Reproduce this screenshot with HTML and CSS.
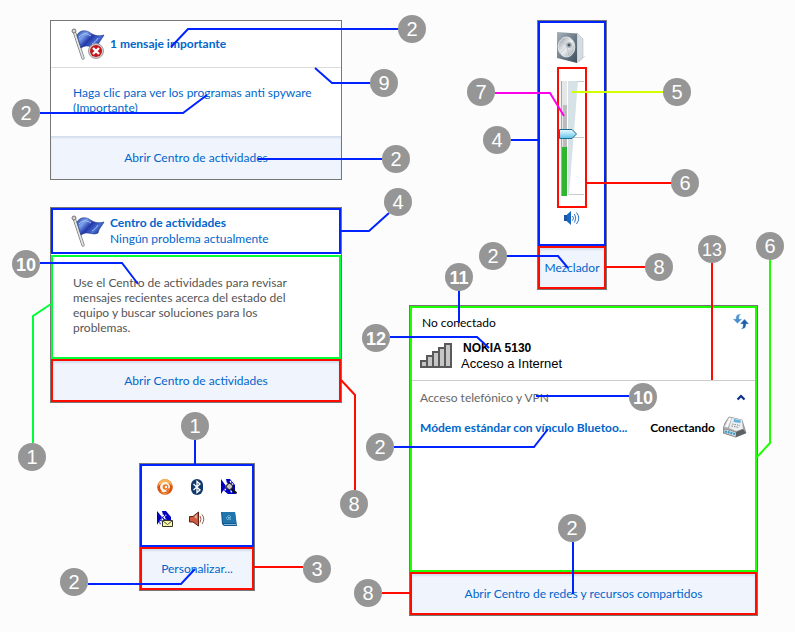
FILE: index.html
```html
<!DOCTYPE html>
<html lang="es">
<head>
<meta charset="utf-8">
<title>Área de notificación</title>
<meta name="viewport" content="width=device-width, initial-scale=1">
<link rel="stylesheet" href="styles.css">
</head>
<body>
<svg class="defs" aria-hidden="true">
  <defs>
    <linearGradient id="cloth" x1="0" y1="0" x2="1" y2="0.6">
      <stop offset="0" stop-color="#1c3c9c"/><stop offset="0.3" stop-color="#7da3ee"/>
      <stop offset="0.55" stop-color="#2338a8"/><stop offset="0.8" stop-color="#4a6fd6"/><stop offset="1" stop-color="#15308c"/>
    </linearGradient>
    <symbol id="flag" viewBox="0 0 34 32">
      <path d="M3 3L12 30" stroke="#777" stroke-width="3.200" stroke-linecap="round"/>
      <path d="M3 3L12 30" stroke="#e3e4e6" stroke-width="1.800" stroke-linecap="round"/>
      <circle cx="3" cy="3" r="2" fill="#d5d5d5" stroke="#777"/>
      <path d="M6 7C9 2 14 2 18 4C22 7 27 9 33 7C31 11 28 13 27 18C21 21 17 15 10 20Z" fill="url(#cloth)" stroke="#1a3283" stroke-width="0.600"/>
      <path d="M8 9C12 4 17 6 20 8M27 10C25 13 23 15 21 16" fill="none" stroke="#a9c0f3" stroke-width="1"/>
    </symbol>
  </defs>
</svg>

<main class="board">
  <div class="column">

    <section class="panel">
      <header class="alert-head">
        <svg class="flag" viewBox="0 0 34 32" aria-hidden="true">
          <use href="#flag"/>
          <circle cx="25" cy="23" r="7.500" fill="#d0d0d2" stroke="#8c8c8c" stroke-width="0.800"/>
          <circle cx="25" cy="23" r="6" fill="#c4161c"/>
          <path d="M22 20L28 26M28 20L22 26" stroke="#fff" stroke-width="2.400"/>
        </svg>
        <h2 class="title">1 mensaje importante</h2>
      </header>
      <div class="alert-body">
        <a class="link" href="#spyware">Haga clic para ver los programas anti spyware (Importante)</a>
      </div>
      <footer class="foot"><a class="link" href="#centro">Abrir Centro de actividades</a></footer>
      <svg class="leads" viewBox="50 20 1 1">
        <path class="lead blue" d="M40 113H183L207 95"/>
        <circle cx="26" cy="113" r="14"/><text x="26" y="120">2</text>
      </svg>
      <svg class="leads leads-end" viewBox="342 20 1 1">
        <path class="lead blue" d="M398 29H188L171 47M370 83H332L315 68M382 159H258"/>
        <circle cx="412" cy="29" r="14"/><text x="412" y="36">2</text>
        <circle cx="384" cy="83" r="14"/><text x="384" y="90">9</text>
        <circle cx="396" cy="159" r="14"/><text x="396" y="166">2</text>
      </svg>
    </section>

    <section class="panel">
      <header class="box box-blue status-head">
        <svg class="flag" viewBox="0 0 34 32" aria-hidden="true"><use href="#flag"/></svg>
        <div>
          <h2 class="title">Centro de actividades</h2>
          <p class="subtitle">Ningún problema actualmente</p>
        </div>
      </header>
      <div class="box box-green status-body">
        <p>Use el Centro de actividades para revisar mensajes recientes acerca del estado del equipo y buscar soluciones para los problemas.</p>
      </div>
      <footer class="box box-red foot"><a class="link" href="#centro">Abrir Centro de actividades</a></footer>
      <svg class="leads" viewBox="50 207 1 1">
        <path class="lead blue" d="M40 263H122L138 284"/>
        <path class="lead green" d="M51 304L33 316V443"/>
        <circle cx="26" cy="264" r="14"/><text class="wide" x="26" y="271">10</text>
        <circle cx="32" cy="457" r="14"/><text x="32" y="464">1</text>
      </svg>
      <svg class="leads leads-end" viewBox="342 207 1 1">
        <path class="lead blue" d="M341 231H369L389 213"/>
        <path class="lead red" d="M341 380L355 395V490"/>
        <circle cx="398" cy="202" r="14"/><text x="398" y="209">4</text>
        <circle cx="354" cy="504" r="14"/><text x="354" y="511">8</text>
      </svg>
    </section>

    <section class="panel tray">
      <div class="box box-blue tray-icons">
        <button class="icon-button" aria-label="Antivirus">
          <svg viewBox="0 0 16 16"><circle cx="8" cy="8" r="7.800" fill="#d9530f"/><path d="M1 7A7 7 0 0 1 15 7Q12 3 8 4Q4 4 1 7Z" fill="#f9b15a"/><path d="M3 12Q8 16 13 12Q10 15 8 15Q5 15 3 12Z" fill="#ffb648"/><circle cx="8" cy="8" r="5" fill="#fff4e4"/><circle cx="8.500" cy="8" r="2.800" fill="#ee7420"/><circle cx="9" cy="8" r="1.200" fill="#fff"/><path d="M4 12.500L7.500 11.500V13.500Z" fill="#fff"/><path d="M9.500 12L12.500 9.500" stroke="#e8661a" stroke-width="1.500"/></svg>
        </button>
        <button class="icon-button" aria-label="Bluetooth">
          <svg viewBox="0 0 16 16"><rect x="2" width="12" height="16" rx="6" fill="#12386b"/><path d="M4.500 5L11 11L8 13.500V2.500L11 5L4.500 11" fill="none" stroke="#fff" stroke-width="1.300"/></svg>
        </button>
        <button class="icon-button" aria-label="Búsqueda">
          <svg viewBox="0 0 16 16"><path d="M0 0L5 7L0 15Z" fill="#0000c0"/><path d="M5 0H9L14 6V15H7L2 11L6 6Z" fill="#0000c0"/><path d="M4 1L11 14M2 14L8 5M9 2L12 6" stroke="#fff" stroke-width="1.300" stroke-dasharray="2 1"/><circle cx="8.500" cy="7.500" r="3" fill="#c9c9c9" stroke="#111"/><path d="M11 10L15.500 14.500" stroke="#111" stroke-width="2"/></svg>
        </button>
        <button class="icon-button" aria-label="Correo">
          <svg viewBox="0 0 16 16"><path d="M0 0L5 6L0 14Z" fill="#0000c0"/><path d="M5 0H9L14 6V9H5L3 14L2 11L6 5Z" fill="#0000c0"/><path d="M4 1L9 9M1 14L9 4" stroke="#fff" stroke-width="1.400" stroke-dasharray="2 1"/><path d="M5.500 9.500H15.500V15.500H5.500Z" fill="#f6f6a0" stroke="#333"/><path d="M6 10L10.500 13.500L15 10" fill="none" stroke="#555"/></svg>
        </button>
        <button class="icon-button" aria-label="Sonido">
          <svg viewBox="0 0 16 16"><path d="M.5 5.500H4L9.500 1V15L4 11H.5Z" fill="#cf5a3c" stroke="#5a2117"/><path d="M5 6L8 3V8Z" fill="#eda48d"/><path d="M11 5Q13 8 11 11.500M13 3.500Q16.500 8 13 13" fill="none" stroke="#9c5a48"/></svg>
        </button>
        <button class="icon-button" aria-label="Pantalla">
          <svg viewBox="0 0 16 16"><path d="M0 1H14L16 15H3L1 13Z" fill="#14598f"/><path d="M1 1H14L15 12H2Z" fill="#2274ad"/><path d="M5 7H11M8 4V10M6 5L10 9M10 5L6 9" stroke="#8fd0ee" stroke-dasharray="1 1"/><path d="M3 13.500H15" stroke="#7dbbe0"/></svg>
        </button>
      </div>
      <footer class="box box-red foot"><a class="link" href="#personalizar">Personalizar...</a></footer>
      <svg class="leads" viewBox="139 463 1 1">
        <path class="lead blue" d="M195 440V464M88 584H181L195 569"/>
        <circle cx="195" cy="426" r="14"/><text x="195" y="433">1</text>
        <circle cx="74" cy="582" r="14"/><text x="74" y="589">2</text>
      </svg>
      <svg class="leads leads-end" viewBox="255 463 1 1">
        <path class="lead red" d="M254 567H303"/>
        <circle cx="317" cy="569" r="14"/><text x="317" y="576">3</text>
      </svg>
    </section>
  </div>

  <div class="column">

    <section class="panel volume">
      <div class="box box-blue volume-body">
        <svg class="speaker" viewBox="0 0 30 32" aria-hidden="true">
          <defs>
            <linearGradient id="front" x1="0" y1="0" x2="1" y2="1"><stop offset="0" stop-color="#a7b2bb"/><stop offset="0.5" stop-color="#6f7f8c"/><stop offset="1" stop-color="#3f4f5b"/></linearGradient>
            <linearGradient id="cone" x1="0" y1="0" x2="1" y2="1"><stop offset="0" stop-color="#8c969d"/><stop offset="0.5" stop-color="#eef1f3"/><stop offset="1" stop-color="#9aa4ab"/></linearGradient>
          </defs>
          <path d="M22 30L30 23L22 27Z" fill="#ddd"/>
          <path d="M20 1L26 7V25L20 31Z" fill="#d5dce2" stroke="#aab3ba" stroke-width="0.500"/>
          <path d="M0 0L20 1.500V31L0 26Z" fill="url(#front)"/>
          <ellipse cx="9.500" cy="15" rx="8.300" ry="10" fill="url(#cone)" stroke="#dfe5e9" stroke-width="1"/>
          <path d="M10 14L3 22M10 14L4 8M10 14L12 24" stroke="#b3bbc1" stroke-width="0.700"/>
          <circle cx="12" cy="13" r="3" fill="#aeb7be"/><circle cx="12" cy="13" r="1.500" fill="#45525c"/>
        </svg>
        <div class="box box-red slider">
          <svg class="slider-art" viewBox="0 0 26 137" aria-hidden="true">
            <defs><linearGradient id="thumb" x1="0" y1="0" x2="0" y2="1"><stop offset="0" stop-color="#effaff"/><stop offset="0.500" stop-color="#a9e1f7"/><stop offset="1" stop-color="#5dc0e6"/></linearGradient></defs>
            <path d="M9 12H19L10 126H9Z" fill="#d7e1e8"/>
            <path d="M18 12.500H25M13 68.500H25M10 125.500H25" stroke="#c9c9c9"/>
            <rect x="2" y="12" width="6" height="115" fill="#e6e6e6"/>
            <rect x="4" y="36" width="4" height="43" fill="#bcbcbc"/>
            <rect x="2" y="12" width="1" height="115" fill="#a9a9a9"/>
            <rect x="3" y="78" width="5" height="49" fill="#30b52e"/>
            <path d="M0.500 60.500H13L17.500 65L13 69.500H0.500Z" fill="url(#thumb)" stroke="#176f91"/>
          </svg>
          <input class="slider-input" type="range" min="0" max="100" value="53" aria-label="Volumen">
        </div>
        <button class="icon-button" aria-label="Silenciar">
          <svg viewBox="0 0 16 16"><path d="M0 5H3V11H0Z" fill="#1a56a6"/><path d="M3 4.500L7 1V15L3 11.500Z" fill="#1567c0"/><path d="M8.500 6Q10.500 8 8.500 10.500M10.500 4Q13 8 10.500 12.500M12.500 2.500Q17 8 12.500 14" fill="none" stroke="#2a72bd"/></svg>
        </button>
      </div>
      <footer class="box box-red foot"><a class="link" href="#mezclador">Mezclador</a></footer>
      <svg class="leads" viewBox="537 20 1 1">
        <path class="lead magenta" d="M495 93H550L564 116"/>
        <path class="lead lime" d="M572 92H663"/>
        <path class="lead blue" d="M511 140H538M507 256H558L568 268"/>
        <path class="lead red" d="M587 183H671M606 267H645"/>
        <circle cx="481" cy="92" r="14"/><text x="481" y="99">7</text>
        <circle cx="677" cy="92" r="14"/><text x="677" y="99">5</text>
        <circle cx="497" cy="140" r="14"/><text x="497" y="147">4</text>
        <circle cx="685" cy="183" r="14"/><text x="685" y="190">6</text>
        <circle cx="493" cy="256" r="14"/><text x="493" y="263">2</text>
        <circle cx="659" cy="267" r="14"/><text x="659" y="274">8</text>
      </svg>
    </section>

    <section class="panel">
      <div class="box box-net network-body">
        <div class="net-current">
          <div class="net-row">
            <p class="net-state">No conectado</p>
            <button class="icon-button" aria-label="Actualizar">
              <svg viewBox="0 0 16 16"><path d="M8 0C3 0 3 3 3 5H0L4.500 9.500L9 5H6C6 3 6 1 8 0Z" fill="#4a90d0" stroke="#bcd8ee" stroke-width="0.500"/><path d="M8 15C13 15 13 12 13 10H16L11.500 5L7 10H10C10 12 10 14 8 15Z" fill="#1f5fa8" stroke="#bcd8ee" stroke-width="0.500"/></svg>
            </button>
          </div>
          <div class="net-item">
            <svg class="signal" viewBox="0 0 32 26" aria-hidden="true"><path d="M1 18H7V24H1ZM7 13H13V24H7ZM13 9H19V24H13ZM19 5H25V24H19ZM25 1H31V24H25Z" fill="#c6c6c6" stroke="#5a5a5a" stroke-width="2"/></svg>
            <div>
              <p class="net-name">NOKIA 5130</p>
              <p class="net-access">Acceso a Internet</p>
            </div>
          </div>
        </div>
        <div class="net-dialup">
          <div class="net-row">
            <p class="net-group">Acceso telefónico y VPN</p>
            <button class="icon-button" aria-label="Contraer">
              <svg viewBox="0 0 16 16"><path d="M4.500 10.500L8 7L11.500 10.500" fill="none" stroke="#0a2f8c" stroke-width="2.200"/></svg>
            </button>
          </div>
          <div class="modem">
            <a class="link strong" href="#modem">Módem estándar con vínculo Bluetoo...</a>
            <span class="modem-state">Conectando</span>
            <svg class="phone" viewBox="0 0 24 24" aria-hidden="true">
              <path d="M2 8L6 2L19 5L23 18L13 22L0 18V14Z" fill="#a9acae" stroke="#777" stroke-width="0.700"/>
              <path d="M1 12L6 2L9 3L5 13Z" fill="#f6f6f6" stroke="#999" stroke-width="0.500"/>
              <path d="M9 3L19 5L20 14L13 16L6 13Z" fill="#eceef0"/>
              <path d="M11 4L18 5.500L17.500 8L10.500 7Z" fill="#63b3e0"/>
              <path d="M9 9L17 10.500M8.500 11L16 12.500" stroke="#888" stroke-dasharray="1.500 1"/>
              <path d="M1 14L13 17V22L1 18Z" fill="#dfe3e6" stroke="#777" stroke-width="0.600"/>
              <path d="M2 16.500L12 19" stroke="#2f9bc4" stroke-width="2.200" stroke-dasharray="2 0.800"/>
              <path d="M13 17L20 14L23 18L13 22Z" fill="#5d6062"/>
            </svg>
          </div>
        </div>
      </div>
      <footer class="box box-red foot"><a class="link" href="#redes">Abrir Centro de redes y recursos compartidos</a></footer>
      <svg class="leads" viewBox="409 305 1 1">
        <path class="lead blue" d="M459 291V323M390 337H477L489 348M394 447H534L548 429M629 396H536M573 542V594"/>
        <path class="lead red" d="M382 593H410"/>
        <circle cx="459" cy="277" r="14"/><text class="wide" x="459" y="284">11</text>
        <circle cx="376" cy="338" r="14"/><text class="wide" x="376" y="345">12</text>
        <circle cx="380" cy="447" r="14"/><text x="380" y="454">2</text>
        <circle cx="643" cy="397" r="14"/><text class="wide" x="643" y="404">10</text>
        <circle cx="572" cy="528" r="14"/><text x="572" y="535">2</text>
        <circle cx="368" cy="593" r="14"/><text x="368" y="600">8</text>
      </svg>
      <svg class="leads leads-end" viewBox="758 305 1 1">
        <path class="lead red" d="M712 263V380"/>
        <path class="lead green-net" d="M770 260V443L757 457"/>
        <circle cx="712" cy="249" r="14"/><text class="thin" x="712" y="256">13</text>
        <circle cx="770" cy="246" r="14"/><text x="770" y="253">6</text>
      </svg>
    </section>
  </div>
</main>
</body>
</html>
```
FILE: styles.css
```css
* { box-sizing: border-box; }

body {
  margin: 0;
  background: #fcfcfc;
  color: #000;
  font: 12px/15px Lato, "Open Sans", sans-serif;
}

h2, p { margin: 0; font-size: 12px; }

.defs { position: absolute; width: 0; height: 0; }

.board {
  display: grid;
  grid-template-columns: minmax(292px, 292fr) minmax(349px, 349fr);
  column-gap: 67px;
  align-items: start;
  padding: 20px 37px 16px 50px;
}

.column { display: flex; flex-direction: column; }

.panel {
  position: relative;
  border: 1px solid #777;
  background: #fff;
}

.column:first-child .panel + .panel { margin-top: 27px; }
.column:first-child .panel.tray { margin-top: 60px; }
.column:last-child .panel + .panel { margin-top: 15px; }

.box { border: 2px solid; }
.box-blue { border-color: #0024ff; }
.box-green { border-color: #00ff36; }
.box-net { border-color: #1eff00; }
.box-red { border-color: #ff0c00; }

.link { color: #0066cc; text-decoration: none; }
.title { color: #0066cc; font-weight: 700; line-height: 16px; }
.subtitle { color: #0066cc; line-height: 16px; }
.strong { font-weight: 700; }

.foot {
  display: flex;
  align-items: center;
  justify-content: center;
  min-height: 43px;
  background: #f0f4fc;
  box-shadow: inset 0 2px 2px #d3dfee;
  white-space: nowrap;
}

.flag { width: 34px; height: 32px; flex: none; }

.alert-head, .status-head {
  display: flex;
  align-items: center;
  gap: 5px;
  min-height: 46px;
  padding-left: 20px;
}
.alert-head { min-height: 47px; border-bottom: 1px solid #dcdcdc; }
.status-head { padding-left: 18px; margin-bottom: 1px; }

.alert-body { min-height: 68px; padding: 17px 22px 0; }

.status-body { min-height: 104px; padding: 18px 48px 0 20px; color: #555; }

.tray { width: 116px; margin-left: 89px; }
.tray-icons {
  display: grid;
  grid-template-columns: repeat(3, 16px);
  gap: 16px;
  align-content: start;
  justify-content: center;
  min-height: 83px;
  padding-top: 13px;
}

.icon-button {
  display: block;
  width: 16px;
  height: 16px;
  padding: 0;
  border: 0;
  background: none;
}
.icon-button svg { display: block; width: 16px; height: 16px; }

.volume { width: 70px; margin-left: 128px; }
.volume-body {
  display: flex;
  flex-direction: column;
  align-items: center;
  min-height: 225px;
  padding-top: 9px;
}
.speaker { width: 30px; height: 32px; margin-bottom: 3px; }
.slider { position: relative; width: 30px; height: 141px; margin-bottom: 2px; }
.slider-art { display: block; width: 26px; height: 137px; }
.slider-input {
  position: absolute;
  top: 12px;
  left: 0;
  width: 18px;
  height: 114px;
  margin: 0;
  appearance: none;
  background: transparent;
  writing-mode: vertical-lr;
  direction: rtl;
}
.slider-input::-webkit-slider-thumb { appearance: none; width: 18px; height: 10px; background: transparent; }

.network-body { min-height: 266px; }
.net-row { display: flex; align-items: center; justify-content: space-between; }
.net-current { min-height: 73px; padding: 6px 6px 0 8px; border-bottom: 1px solid #ccc; }
.net-state { padding-left: 2px; }
.net-item { display: flex; align-items: center; gap: 9px; padding-top: 10px; }
.net-name, .net-access { font-family: "Liberation Sans", Arial, sans-serif; line-height: 16px; }
.net-name { font-weight: 700; padding-left: 2px; }
.net-access { font-size: 13px; }
.signal { width: 32px; height: 26px; flex: none; }
.net-dialup { padding: 8px 6px 0 8px; }
.net-group { color: #666; }
.modem {
  display: flex;
  align-items: center;
  gap: 8px;
  padding: 10px 2px 0 0;
  white-space: nowrap;
}
.modem-state { margin-left: auto; font-weight: 700; }
.phone { width: 24px; height: 24px; flex: none; }

.leads {
  position: absolute;
  top: -1px;
  left: -1px;
  width: 1px;
  height: 1px;
  overflow: visible;
  pointer-events: none;
}
.leads-end { left: calc(100% + 1px); }
.leads circle { fill: #969696; }
.leads text {
  fill: #fff;
  font: 20px "Liberation Sans", Arial, sans-serif;
  text-anchor: middle;
}
.leads .wide { font-size: 18px; font-weight: 700; }
.leads .thin { font-size: 18px; }

.lead { fill: none; stroke-width: 2px; }
.blue { stroke: #0024ff; }
.green { stroke: #00ff36; }
.green-net { stroke: #1eff00; }
.red { stroke: #ff0c00; }
.magenta { stroke: #ff00ea; }
.lime { stroke: #d4ff00; }
```
